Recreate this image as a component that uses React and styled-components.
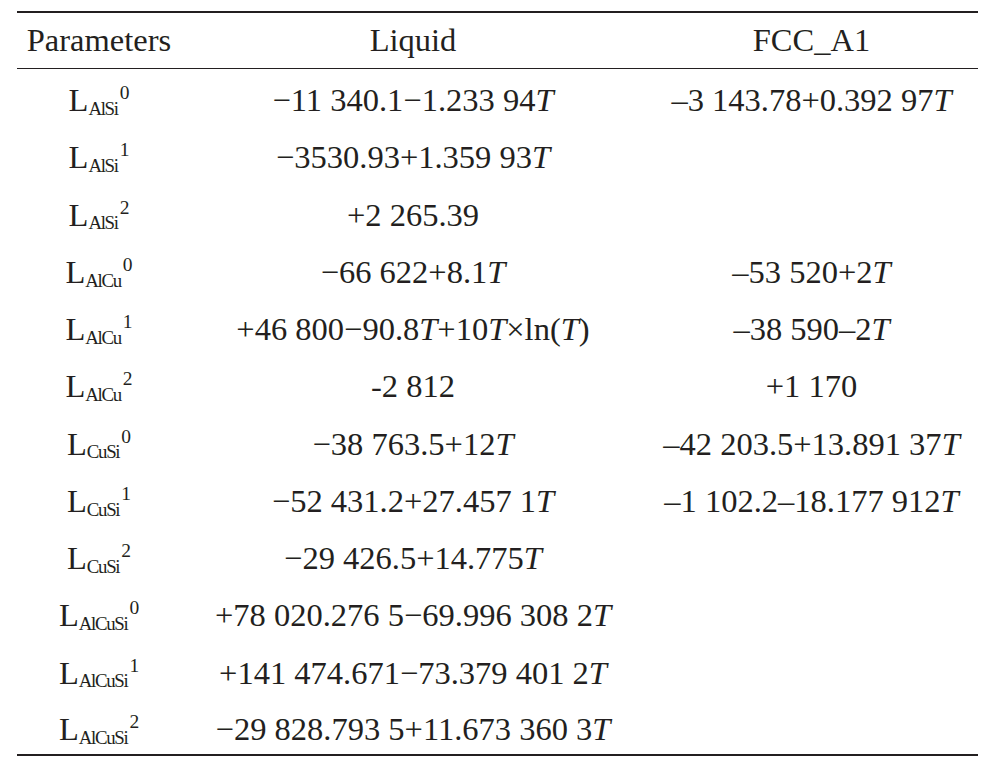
import React from 'react';
import styled, { createGlobalStyle } from 'styled-components';

const GlobalStyle = createGlobalStyle`
  html, body {
    margin: 0;
    padding: 0;
    background: #ffffff;
  }
`;

const Page = styled.div`
  width: 997px;
  height: 770px;
  padding-top: 11px;
  box-sizing: border-box;
  background: #ffffff;
  font-family: "Liberation Serif", "Times New Roman", serif;
  color: #231f20;
`;

const Table = styled.table`
  margin-left: 17px;
  width: 961px;
  border-collapse: collapse;
  table-layout: fixed;
  font-size: 32.5px;
  border-top: 2px solid #231f20;
  border-bottom: 2px solid #231f20;
`;

const HeadRow = styled.tr`
  height: 56px;
  border-bottom: 1px solid #231f20;
`;

const Row = styled.tr`
  height: 57.25px;
`;

const Th = styled.th`
  font-weight: normal;
  text-align: center;
  padding: 0;
  width: ${(p) => p.$w}px;
  white-space: nowrap;
`;

const Td = styled.td`
  text-align: center;
  padding: 8px 0 0;
  white-space: nowrap;
`;

const Sym = styled.span`
  display: inline-flex;
  align-items: baseline;
`;

const Sub = styled.span`
  font-size: 0.58em;
  letter-spacing: -0.07em;
  position: relative;
  top: 0.2em;
`;

const Sup = styled.span`
  font-size: 0.6em;
  position: relative;
  top: -0.62em;
  margin-left: 2px;
`;

const Var = styled.i`
  font-style: italic;
`;

const rows = [
  ['AlSi', '0', '−11 340.1−1.233 94T', '–3 143.78+0.392 97T'],
  ['AlSi', '1', '−3530.93+1.359 93T', ''],
  ['AlSi', '2', '+2 265.39', ''],
  ['AlCu', '0', '−66 622+8.1T', '–53 520+2T'],
  ['AlCu', '1', '+46 800−90.8T+10T×ln(T)', '–38 590–2T'],
  ['AlCu', '2', '-2 812', '+1 170'],
  ['CuSi', '0', '−38 763.5+12T', '–42 203.5+13.891 37T'],
  ['CuSi', '1', '−52 431.2+27.457 1T', '–1 102.2–18.177 912T'],
  ['CuSi', '2', '−29 426.5+14.775T', ''],
  ['AlCuSi', '0', '+78 020.276 5−69.996 308 2T', ''],
  ['AlCuSi', '1', '+141 474.671−73.379 401 2T', ''],
  ['AlCuSi', '2', '−29 828.793 5+11.673 360 3T', ''],
];

// wrap every T of a formula in italics
const Formula = ({ text }) => {
  const parts = text.split('T');
  return (
    <>
      {parts.map((part, i) => (
        <React.Fragment key={i}>
          {part}
          {i < parts.length - 1 && <Var>T</Var>}
        </React.Fragment>
      ))}
    </>
  );
};

const App = () => {
  return (
    <Page>
      <GlobalStyle />
      <Table>
        <thead>
          <HeadRow>
            <Th $w={164}>Parameters</Th>
            <Th $w={464}>Liquid</Th>
            <Th $w={333}>FCC_A1</Th>
          </HeadRow>
        </thead>
        <tbody>
          {rows.map(([sub, sup, liquid, fcc]) => (
            <Row key={sub + sup}>
              <Td>
                <Sym>
                  L<Sub>{sub}</Sub>
                  <Sup>{sup}</Sup>
                </Sym>
              </Td>
              <Td>
                <Formula text={liquid} />
              </Td>
              <Td>
                <Formula text={fcc} />
              </Td>
            </Row>
          ))}
        </tbody>
      </Table>
    </Page>
  );
};

export default App;
